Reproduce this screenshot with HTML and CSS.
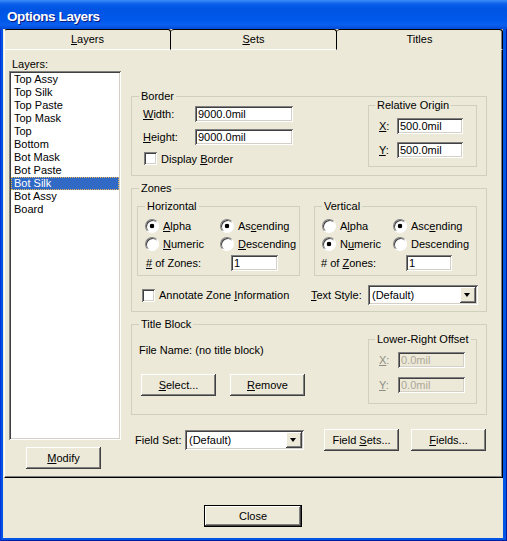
FILE: index.html
```html
<!DOCTYPE html>
<html lang="en">
<head>
  <meta charset="UTF-8"/>
  <title>Options Layers</title>
  <link rel="stylesheet" href="styles.css">
</head>
<body>

<div class="window">
  <div class="titlebar">Options Layers</div>

  <div class="client">
    <div class="tabs">
      <div class="tab-strip">
        <div class="tab"><u>L</u>ayers</div>
        <div class="tab"><u>S</u>ets</div>
        <div class="tab active">Titles</div>
      </div>

      <div class="tab-page">
        <div class="layers-col">
          <div class="caption">Layers:</div>
          <div class="listbox">
            <div>Top Assy</div>
            <div>Top Silk</div>
            <div>Top Paste</div>
            <div>Top Mask</div>
            <div>Top</div>
            <div>Bottom</div>
            <div>Bot Mask</div>
            <div>Bot Paste</div>
            <div class="sel">Bot Silk</div>
            <div>Bot Assy</div>
            <div>Board</div>
          </div>
          <button class="btn modify"><u>M</u>odify</button>
        </div>

        <div class="titles-col">
          <fieldset class="group border-group">
            <legend>Border</legend>
            <div class="body">
              <div class="form-grid">
                <label><u>W</u>idth:</label><input class="edit" value="9000.0mil">
                <label><u>H</u>eight:</label><input class="edit" value="9000.0mil">
                <label class="check"><span>Display <u>B</u>order</span></label>
              </div>
              <fieldset class="group sub origin">
                <legend>Relative Origin</legend>
                <div class="coords">
                  <label><u>X</u>:</label><input class="edit" value="500.0mil">
                  <label><u>Y</u>:</label><input class="edit" value="500.0mil">
                </div>
              </fieldset>
            </div>
          </fieldset>

          <fieldset class="group zones-group">
            <legend>Zones</legend>
            <div class="body">
              <div class="subgroups">
                <fieldset class="group zone">
                  <legend>Horizontal</legend>
                  <div class="radios">
                    <label class="radio on"><span><u>A</u>lpha</span></label>
                    <label class="radio on"><span>As<u>c</u>ending</span></label>
                    <label class="radio"><span><u>N</u>umeric</span></label>
                    <label class="radio"><span><u>D</u>escending</span></label>
                  </div>
                  <div class="count">
                    <label><u>#</u> of Zones:</label><input class="edit" value="1">
                  </div>
                </fieldset>
                <fieldset class="group zone vertical">
                  <legend>Vertical</legend>
                  <div class="radios">
                    <label class="radio"><span>A<u>l</u>pha</span></label>
                    <label class="radio on"><span>Asc<u>e</u>nding</span></label>
                    <label class="radio on"><span>N<u>u</u>meric</span></label>
                    <label class="radio"><span>Descending</span></label>
                  </div>
                  <div class="count">
                    <label># of <u>Z</u>ones:</label><input class="edit" value="1">
                  </div>
                </fieldset>
              </div>
              <div class="annotate">
                <label class="check"><span>Annotate Zone <u>I</u>nformation</span></label>
                <label class="style-label"><u>T</u>ext Style:</label>
                <div class="combo text-style"><span>(Default)</span><i class="arrow"></i></div>
              </div>
            </div>
          </fieldset>

          <fieldset class="group title-group">
            <legend>Title Block</legend>
            <div class="body">
              <div class="tb-left">
                <div class="file-name">File Name: (no title block)</div>
                <div class="tb-buttons">
                  <button class="btn"><u>S</u>elect...</button>
                  <button class="btn"><u>R</u>emove</button>
                </div>
              </div>
              <fieldset class="group sub offset">
                <legend>Lower-Right Offset</legend>
                <div class="coords">
                  <label><u>X</u>:</label><input class="edit" value="0.0mil" disabled>
                  <label><u>Y</u>:</label><input class="edit" value="0.0mil" disabled>
                </div>
              </fieldset>
            </div>
          </fieldset>

          <div class="fieldset-row">
            <label>Field Set:</label>
            <div class="combo field-set"><span>(Default)</span><i class="arrow"></i></div>
            <button class="btn field-sets">Field <u>S</u>ets...</button>
            <button class="btn fields"><u>F</u>ields...</button>
          </div>
        </div>
      </div>
    </div>

    <div class="footer">
      <button class="btn default">Close</button>
    </div>
  </div>
</div>

</body>
</html>
```

FILE: styles.css
```css
* { box-sizing:border-box; }
html, body { margin:0; padding:0; background:#0054e3; }
body { font-family:"Liberation Sans", Arial, sans-serif; font-size:11px; color:#000; }
u { text-decoration-thickness:1px; text-underline-offset:1px; }

/* window frame */
.window {
  width:507px; height:541px;
  display:flex; flex-direction:column;
  background:#0055e5;
  box-shadow:inset 1px 0 #0831d9, inset -1px 0 #001ea0, inset 0 -1px #001ea0;
}
.titlebar {
  height:29px; padding:3px 0 0 7px;
  display:flex; align-items:center;
  color:#fff; font-weight:bold; font-size:13.5px; letter-spacing:-0.4px;
  text-shadow:1px 1px #0a1883;
  background:linear-gradient(#3d8ef8 0, #0a5eea 4px, #0054e3 9px, #0058ea 20px, #0a60ee 25px, #0049d8 29px);
}
.client {
  flex:1; margin:0 4px 3px 3px;
  background:#ece9d8;
  display:flex; flex-direction:column;
}

/* tabs */
.tabs { margin-left:1px; width:499px; }
.tab-strip { display:flex; height:21px; }
.tab {
  flex:1; text-align:center; line-height:19px;
  border-top:1px solid #000; border-right:1px solid #000; border-bottom:1px solid #fff;
  border-radius:3px 3px 0 0;
}
.tab:first-child { border-left:1px solid #fff; }
.tab.active { border-bottom-color:transparent; box-shadow:inset -1px 0 #808080; }
.tab-page {
  height:428px; display:flex; padding:7px 0 0 4px;
  border-left:1px solid #fff; border-right:1px solid #000; border-bottom:1px solid #000;
  box-shadow:inset -1px -1px #808080;
}

/* layer list */
.layers-col { width:112px; display:flex; flex-direction:column; }
.caption { line-height:14px; padding-left:3px; }
.listbox {
  height:369px; padding:2px; background:#fff;
  box-shadow:inset 1px 1px #808080, inset -1px -1px #fff, inset 2px 2px #404040, inset -2px -2px #d4d0c8;
}
.listbox div { height:13px; line-height:13px; padding-left:3px; }
.listbox .sel { background:#316ac5; color:#fff; outline:1px dotted #e9b650; outline-offset:-1px; }
.modify { margin:7px 0 0 17px; }

/* common controls */
.btn {
  width:75px; height:22px; padding:0;
  font:inherit; color:#000; background:#ece9d8; border:0;
  box-shadow:inset -1px -1px #404040, inset 1px 1px #fff, inset -2px -2px #808080;
}
.btn.default { width:98px; border:1px solid #000; }
.edit {
  height:16px; padding:0 3px; border:0; margin:0;
  font:inherit; color:#000; background:#fff;
  box-shadow:inset 1px 1px #808080, inset -1px -1px #fff, inset 2px 2px #404040, inset -2px -2px #d4d0c8;
}
.edit:disabled { background:#ece9d8; color:#aca899; }
.check { display:flex; align-items:center; gap:4px; height:13px; }
.check::before {
  content:""; width:13px; height:13px; flex:none; background:#fff;
  box-shadow:inset 1px 1px #808080, inset -1px -1px #fff, inset 2px 2px #404040, inset -2px -2px #d4d0c8;
}
.radio { display:flex; align-items:center; gap:4px; height:13px; }
.radio::before {
  content:""; width:12px; height:12px; flex:none; border-radius:50%;
  border:1px solid; border-color:#808080 #fff #fff #808080;
  background:#fff; box-shadow:inset 1px 1px #404040;
}
.radio.on::before { background:radial-gradient(circle, #000 0 2px, #fff 2.6px); }
.combo {
  display:flex; height:20px; padding:2px; background:#fff;
  box-shadow:inset 1px 1px #808080, inset -1px -1px #fff, inset 2px 2px #404040, inset -2px -2px #d4d0c8;
}
.combo span { flex:1; line-height:16px; padding-left:2px; }
.arrow {
  width:16px; height:16px; background:#ece9d8; position:relative;
  box-shadow:inset -1px -1px #404040, inset 1px 1px #fff, inset -2px -2px #808080;
}
.arrow::after {
  content:""; position:absolute; left:4px; top:6px;
  border:3.5px solid transparent; border-top:4px solid #000; border-bottom:0;
}

/* group boxes */
.group { margin:0; padding:0; min-width:0; border:1px solid #d0d0bf; }
.group legend { margin-left:7px; padding:0 2px; line-height:13px; }
.sub legend { margin-left:6px; }

.titles-col { width:356px; margin:33px 0 0 10px; }

.border-group { height:86px; }
.border-group .body { display:flex; padding:0 9px 0 11px; }
.form-grid {
  display:grid; grid-template-columns:52px 98px; row-gap:7px;
  align-items:center; align-content:start; margin-top:3px;
}
.form-grid .check { grid-column:1 / -1; margin-left:1px; }
.sub { margin-left:auto; width:109px; }
.origin { margin-top:-4px; height:68px; }
.coords { display:grid; grid-template-columns:18px 66px; row-gap:8px; align-items:center; padding:6px 0 0 10px; }

.zones-group { height:130px; margin-top:6px; }
.zones-group .body { padding:5px 0 0 5px; }
.subgroups { display:flex; gap:14px; }
.zone { width:163px; height:76px; }
.radios { display:grid; grid-template-columns:75px auto; row-gap:5px; padding:6px 0 0 7px; }
.vertical .radios { grid-template-columns:71px auto; }
.count { display:flex; align-items:center; margin:5px 0 0 8px; }
.count label { width:85px; }
.count .edit { width:47px; }
.vertical .count { margin-left:6px; }
.vertical .count .edit { width:46px; }
.annotate { display:flex; align-items:center; height:20px; margin:9px 0 0 5px; }
.annotate .check { width:169px; }
.style-label { width:57px; }
.text-style { width:110px; }

.title-group { height:97px; margin-top:6px; }
.title-group .body { display:flex; padding:0 9px 0 7px; }
.file-name { line-height:13px; margin-top:13px; }
.tb-buttons { display:flex; gap:14px; margin:17px 0 0 2px; }
.offset { margin-top:2px; height:71px; }
.offset .coords { grid-template-columns:19px 67px; row-gap:9px; padding-left:10px; }
.offset label { color:#8d8d84; }

.fieldset-row { display:flex; align-items:center; height:23px; margin-top:13px; padding-left:4px; }
.fieldset-row label { width:50px; }
.field-set { width:119px; }
.field-sets { margin-left:20px; }
.fields { margin-left:12px; }

.footer { display:flex; justify-content:center; padding-top:27px; }
```
